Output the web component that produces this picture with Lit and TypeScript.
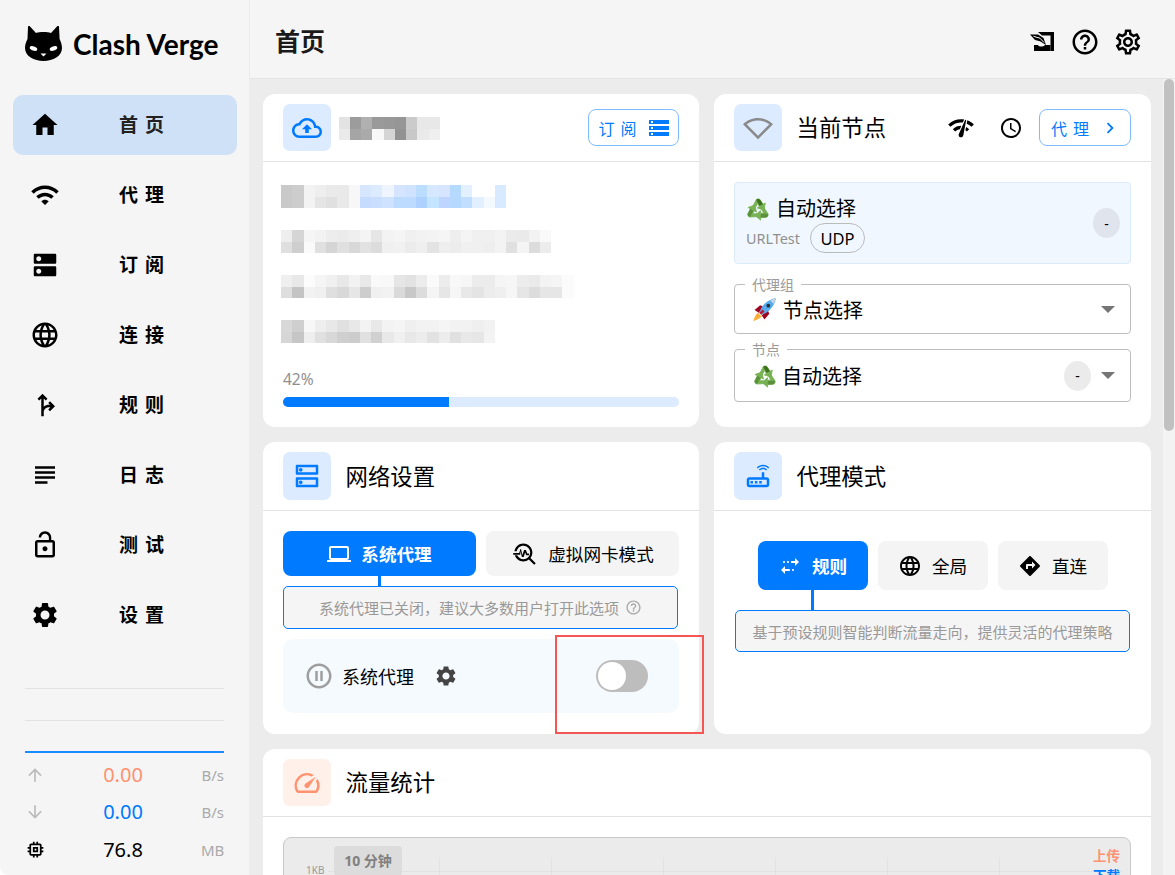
import { LitElement, html, css, svg } from "lit";
import { customElement } from "lit/decorators.js";

const P = {
  home: "M10 20v-6h4v6h5v-8h3L12 3 2 12h3v8z",
  wifi: "M1 9l2 2c4.97-4.97 13.03-4.97 18 0l2-2C16.93 2.93 7.08 2.93 1 9zm8 8l3 3 3-3c-1.65-1.66-4.34-1.66-6 0zm-4-4l2 2c2.76-2.76 7.24-2.76 10 0l2-2C15.14 9.14 8.87 9.14 5 13z",
  dns: "M20 13H4c-.55 0-1 .45-1 1v6c0 .55.45 1 1 1h16c.55 0 1-.45 1-1v-6c0-.55-.45-1-1-1zM7 19c-1.1 0-2-.9-2-2s.9-2 2-2 2 .9 2 2-.9 2-2 2zM20 3H4c-.55 0-1 .45-1 1v6c0 .55.45 1 1 1h16c.55 0 1-.45 1-1V4c0-.55-.45-1-1-1zM7 9c-1.1 0-2-.9-2-2s.9-2 2-2 2 .9 2 2-.9 2-2 2z",
  dnsOutlined: "M20 13H4c-.55 0-1 .45-1 1v6c0 .55.45 1 1 1h16c.55 0 1-.45 1-1v-6c0-.55-.45-1-1-1zm-1 6H5v-4h14v4zm-12-.5c.83 0 1.5-.67 1.5-1.5S7.83 15.5 7 15.5s-1.5.67-1.5 1.5.67 1.5 1.5 1.5zM20 3H4c-.55 0-1 .45-1 1v6c0 .55.45 1 1 1h16c.55 0 1-.45 1-1V4c0-.55-.45-1-1-1zm-1 6H5V5h14v4zM7 8.5c.83 0 1.5-.67 1.5-1.5S7.83 5.5 7 5.5 5.5 6.17 5.5 7 6.17 8.5 7 8.5z",
  language: "M11.99 2C6.47 2 2 6.48 2 12s4.47 10 9.99 10C17.52 22 22 17.52 22 12S17.52 2 11.99 2zm6.93 6h-2.95c-.32-1.25-.78-2.45-1.38-3.56 1.84.63 3.37 1.91 4.33 3.56zM12 4.04c.83 1.2 1.48 2.53 1.91 3.96h-3.82c.43-1.43 1.08-2.76 1.91-3.96zM4.26 14C4.1 13.36 4 12.69 4 12s.1-1.36.26-2h3.38c-.08.66-.14 1.32-.14 2s.06 1.34.14 2H4.26zm.82 2h2.95c.32 1.25.78 2.45 1.38 3.56-1.84-.63-3.37-1.9-4.33-3.56zm2.95-8H5.08c.96-1.66 2.49-2.93 4.33-3.56C8.81 5.55 8.35 6.75 8.03 8zM12 19.96c-.83-1.2-1.48-2.53-1.91-3.96h3.82c-.43 1.43-1.08 2.76-1.91 3.96zM14.34 14H9.66c-.09-.66-.16-1.32-.16-2s.07-1.35.16-2h4.68c.09.65.16 1.32.16 2s-.07 1.34-.16 2zm.25 5.56c.6-1.11 1.06-2.31 1.38-3.56h2.95c-.96 1.65-2.49 2.93-4.33 3.56zM16.36 14c.08-.66.14-1.32.14-2s-.06-1.34-.14-2h3.38c.16.64.26 1.31.26 2s-.1 1.36-.26 2h-3.38z",
  fork: "M14.59 15.59L16 17l4-4-4-4-1.41 1.41L16.17 12c-1.51-.33-3.73.08-5.17 1.36V6.83l1.59 1.59L14 7l-4-4-4 4 1.41 1.41L9 6.83V21h2v-4c.73-2.58 3.07-3.47 5.17-3l-1.58 1.59z",
  subject: "M14 17H4v2h10v-2zm6-8H4v2h16V9zM4 15h16v-2H4v2zM4 5v2h16V5H4z",
  lockOpen: "M12 17c1.1 0 2-.9 2-2s-.9-2-2-2-2 .9-2 2 .9 2 2 2zm6-9h-1V6c0-2.76-2.24-5-5-5S7 3.24 7 6h1.9c0-1.71 1.39-3.1 3.1-3.1 1.71 0 3.1 1.39 3.1 3.1v2H6c-1.1 0-2 .9-2 2v10c0 1.1.9 2 2 2h12c1.1 0 2-.9 2-2V10c0-1.1-.9-2-2-2zm0 12H6V10h12v10z",
  settings: "M19.14 12.94c.04-.3.06-.61.06-.94 0-.32-.02-.64-.07-.94l2.03-1.58c.18-.14.23-.41.12-.61l-1.92-3.32c-.12-.22-.37-.29-.59-.22l-2.39.96c-.5-.38-1.03-.7-1.62-.94l-.36-2.54c-.04-.24-.24-.41-.48-.41h-3.84c-.24 0-.43.17-.47.41l-.36 2.54c-.59.24-1.13.57-1.62.94l-2.39-.96c-.22-.08-.47 0-.59.22L2.74 8.87c-.12.21-.08.47.12.61l2.03 1.58c-.05.3-.09.63-.09.94s.02.64.07.94l-2.03 1.58c-.18.14-.23.41-.12.61l1.92 3.32c.12.22.37.29.59.22l2.39-.96c.5.38 1.03.7 1.62.94l.36 2.54c.05.24.24.41.48.41h3.84c.24 0 .44-.17.47-.41l.36-2.54c.59-.24 1.13-.56 1.62-.94l2.39.96c.22.08.47 0 .59-.22l1.92-3.32c.12-.22.07-.47-.12-.61l-2.01-1.58zM12 15.6c-1.98 0-3.6-1.62-3.6-3.6s1.62-3.6 3.6-3.6 3.6 1.62 3.6 3.6-1.62 3.6-3.6 3.6z",
  settingsOutlined: "M19.43 12.98c.04-.32.07-.64.07-.98 0-.34-.03-.66-.07-.98l2.11-1.65c.19-.15.24-.42.12-.64l-2-3.46c-.09-.16-.26-.25-.44-.25-.06 0-.12.01-.17.03l-2.49 1c-.52-.4-1.08-.73-1.69-.98l-.38-2.65C14.46 2.18 14.25 2 14 2h-4c-.25 0-.46.18-.49.42l-.38 2.65c-.61.25-1.17.59-1.69.98l-2.49-1c-.06-.02-.12-.03-.18-.03-.17 0-.34.09-.43.25l-2 3.46c-.13.22-.07.49.12.64l2.11 1.65c-.04.32-.07.65-.07.98 0 .33.03.66.07.98l-2.11 1.65c-.19.15-.24.42-.12.64l2 3.46c.09.16.26.25.44.25.06 0 .12-.01.17-.03l2.49-1c.52.4 1.08.73 1.69.98l.38 2.65c.03.24.24.42.49.42h4c.25 0 .46-.18.49-.42l.38-2.65c.61-.25 1.17-.59 1.69-.98l2.49 1c.06.02.12.03.18.03.17 0 .34-.09.43-.25l2-3.46c.12-.22.07-.49-.12-.64l-2.11-1.65zm-1.98-1.71c.04.31.05.52.05.73 0 .21-.02.43-.05.73l-.14 1.13.89.7 1.08.84-.7 1.21-1.27-.51-1.04-.42-.9.68c-.43.32-.84.56-1.25.73l-1.06.43-.16 1.13-.2 1.35h-1.4l-.19-1.35-.16-1.13-1.06-.43c-.43-.18-.83-.41-1.23-.71l-.91-.7-1.06.43-1.27.51-.7-1.21 1.08-.84.89-.7-.14-1.13c-.03-.31-.05-.54-.05-.74s.02-.43.05-.73l.14-1.13-.89-.7-1.08-.84.7-1.21 1.27.51 1.04.42.9-.68c.43-.32.84-.56 1.25-.73l1.06-.43.16-1.13.2-1.35h1.39l.19 1.35.16 1.13 1.06.43c.43.18.83.41 1.23.71l.91.7 1.06-.43 1.27-.51.7 1.21-1.07.85-.89.7.14 1.13zM12 8c-2.21 0-4 1.79-4 4s1.79 4 4 4 4-1.79 4-4-1.79-4-4-4zm0 6c-1.1 0-2-.9-2-2s.9-2 2-2 2 .9 2 2-.9 2-2 2z",
  help: "M11 18h2v-2h-2v2zm1-16C6.48 2 2 6.48 2 12s4.48 10 10 10 10-4.48 10-10S17.52 2 12 2zm0 18c-4.41 0-8-3.59-8-8s3.59-8 8-8 8 3.59 8 8-3.59 8-8 8zm0-14c-2.21 0-4 1.79-4 4h2c0-1.1.9-2 2-2s2 .9 2 2c0 2-3 1.75-3 5h2c0-2.25 3-2.5 3-5 0-2.21-1.79-4-4-4z",
  time: "M11.99 2C6.47 2 2 6.48 2 12s4.47 10 9.99 10C17.52 22 22 17.52 22 12S17.52 2 11.99 2zM12 20c-4.42 0-8-3.58-8-8s3.58-8 8-8 8 3.58 8 8-3.58 8-8 8zm.5-13H11v6l5.25 3.15.75-1.23-4.5-2.67z",
  network: "M15.9 5c-.17 0-.32.09-.41.23l-.07.15-5.18 11.65c-.16.29-.26.61-.26.96 0 1.11.9 2.01 2.01 2.01.96 0 1.77-.68 1.96-1.59l.01-.03L16.4 5.5c0-.28-.22-.5-.5-.5zM1 9l2 2c2.88-2.88 6.79-4.08 10.53-3.62l1.19-2.68C9.89 3.84 4.74 5.27 1 9zm20 2l2-2c-1.64-1.64-3.55-2.82-5.59-3.57l-.53 2.82c1.5.62 2.9 1.53 4.12 2.75zm-4 4l2-2c-.8-.8-1.7-1.42-2.66-1.89l-.55 2.92c.42.27.83.59 1.21.97zM5 13l2 2c1.13-1.13 2.56-1.79 4.03-2l1.28-2.88c-2.63-.08-5.3.87-7.31 2.88z",
  cloud: "M19.35 10.04C18.67 6.59 15.64 4 12 4 9.11 4 6.6 5.64 5.35 8.04 2.34 8.36 0 10.91 0 14c0 3.31 2.69 6 6 6h13c2.76 0 5-2.24 5-5 0-2.64-2.05-4.78-4.65-4.96zM19 18H6c-2.21 0-4-1.79-4-4 0-2.05 1.53-3.76 3.56-3.97l1.07-.11.5-.95C8.08 7.14 9.94 6 12 6c2.62 0 4.88 1.86 5.39 4.43l.3 1.5 1.53.11c1.56.1 2.78 1.41 2.78 2.96 0 1.65-1.35 3-3 3zM8 13h2.55v3h2.9v-3H16l-4-4z",
  storage: "M2 20h20v-4H2v4zm2-3h2v2H4v-2zM2 4v4h20V4H2zm4 3H4V5h2v2zm-4 7h20v-4H2v4zm2-3h2v2H4v-2z",
  chevron: "M10 6L8.59 7.41 13.17 12l-4.58 4.59L10 18l6-6z",
  signal: "M12 4C7.31 4 3.07 5.9 0 8.98L12 21 24 8.98C20.93 5.9 16.69 4 12 4zM2.92 9.07C5.51 7.08 8.67 6 12 6s6.49 1.08 9.08 3.07L12 18.17l-9.08-9.1z",
  laptop: "M20 18c1.1 0 1.99-.9 1.99-2L22 6c0-1.1-.9-2-2-2H4c-1.1 0-2 .9-2 2v10c0 1.1.9 2 2 2H0v2h24v-2h-4zM4 6h16v10H4V6z",
  troubleshoot: "M22 20.59l-4.69-4.69C18.37 14.55 19 12.85 19 11c0-4.42-3.58-8-8-8-4.08 0-7.44 3.05-7.93 7h2.02C5.57 7.17 8.03 5 11 5c3.31 0 6 2.69 6 6s-2.69 6-6 6c-2.42 0-4.5-1.44-5.45-3.5H3.4C4.45 16.69 7.46 19 11 19c1.85 0 3.55-.63 4.9-1.69L20.59 22 22 20.59zM8.43 9.69L9.65 15h1.64l1.26-3.78.95 2.28h2.5v-1.5h-1.5l-1.3-3.1h-1.55l-1.55 4.45-1.2-5.35H8.4L7.25 11.5H2V13h6.25z",
  pause: "M9 16h2V8H9v8zm3-14C6.48 2 2 6.48 2 12s4.48 10 10 10 10-4.48 10-10S17.52 2 12 2zm0 18c-4.41 0-8-3.59-8-8s3.59-8 8-8 8 3.59 8 8-3.59 8-8 8zm1-4h2V8h-2v8z",
  router: "M16 4.2c1.5 0 3 .6 4.2 1.7l.8-.8C19.6 3.7 17.8 3 16 3s-3.6.7-5 2.1l.8.8C13 4.8 14.5 4.2 16 4.2zm-3.3 2.5l.8.8c.7-.7 1.6-1 2.5-1s1.8.3 2.5 1l.8-.8c-.9-.9-2.1-1.4-3.3-1.4s-2.4.5-3.3 1.4zM19 13h-2V9h-2v4H5c-1.1 0-2 .9-2 2v4c0 1.1.9 2 2 2h14c1.1 0 2-.9 2-2v-4c0-1.1-.9-2-2-2zm0 6H5v-4h14v4zM6 16h2v2H6zm3.5 0h2v2h-2zm3.5 0h2v2h-2z",
  stop: "M17 4l4 4-4 4V9h-4V7h4V4zm-7 3c-.55 0-1 .45-1 1s.45 1 1 1 1-.45 1-1-.45-1-1-1zM6 7c-.55 0-1 .45-1 1s.45 1 1 1 1-.45 1-1-.45-1-1-1zm1 10h4v-2H7v-3l-4 4 4 4v-3zm4 0c.55 0 1-.45 1-1s-.45-1-1-1-1 .45-1 1 .45 1 1 1zm4 0c.55 0 1-.45 1-1s-.45-1-1-1-1 .45-1 1 .45 1 1 1z",
  direct: "M21.71 11.29l-9-9c-.39-.39-1.02-.39-1.41 0l-9 9c-.39.39-.39 1.02 0 1.41l9 9c.39.39 1.02.39 1.41 0l9-9c.39-.38.39-1.01 0-1.41zM14 14.5V12h-4v3H8v-4c0-.55.45-1 1-1h5V7.5l3.5 3.5-3.5 3.5z",
  speed: "M20.38 8.57l-1.23 1.85a8 8 0 0 1-.22 7.58H5.07A8 8 0 0 1 15.58 6.85l1.85-1.23A10 10 0 0 0 3.35 19a2 2 0 0 0 1.72 1h13.85a2 2 0 0 0 1.74-1 10 10 0 0 0-.27-10.44zm-9.79 6.84a2 2 0 0 0 2.83 0l5.66-8.49-8.49 5.66a2 2 0 0 0 0 2.83z",
  up: "M4 12l1.41 1.41L11 7.83V20h2V7.83l5.58 5.59L20 12l-8-8-8 8z",
  down: "M20 12l-1.41-1.41L13 16.17V4h-2v12.17l-5.58-5.59L4 12l8 8 8-8z",
  memory: "M15 9H9v6h6V9zm-2 4h-2v-2h2v2zm8-2V9h-2V7c0-1.1-.9-2-2-2h-2V3h-2v2h-2V3H9v2H7c-1.1 0-2 .9-2 2v2H3v2h2v2H3v2h2v2c0 1.1.9 2 2 2h2v2h2v-2h2v2h2v-2h2c1.1 0 2-.9 2-2v-2h2v-2h-2v-2h2zm-4 6H7V7h10v10z",
};

const icon = (d: string, size = 24, color = "currentColor") => html`<svg
  class="icon"
  width=${size}
  height=${size}
  viewBox="0 0 24 24"
  fill=${color}
>
  <path d=${d}></path>
</svg>`;

const recycle = (size: number) => html`<svg class="icon recycle" width=${size} height=${size} viewBox="0 0 24 24">
  ${[0, 120, 240].map(
    (r) => svg`<g transform="rotate(${r} 12 13.2)">
      <path
        d="M6.600 9.800 10.200 2.800c.6-1.100 3-1.300 3.900-.1l2.900 4.600 2.300-1.300-1.300 7-6.800-2.100 2.200-1.300-1.800-3-2.900 5.100z"
        fill="#77b255"
        stroke="#77b255"
        stroke-width=".8"
        stroke-linejoin="round"
      ></path>
      <path d="M10.200 2.800c.6-1.100 3-1.300 3.900-.1l2.900 4.600-3.400 1.500-1.800-3z" fill=${r === 0 ? "#3e721d" : "#5c913b"}></path>
    </g>`
  )}
</svg>`;

const rocket = (size: number) => html`<svg class="icon" width=${size} height=${size} viewBox="0 0 24 24">
  <path d="M5 15.500C3 17 1 21.500.4 24c2.600-.5 7-2.800 8.600-4.600z" fill="#ffac33"></path>
  <path d="M1.600 12.500 7.500 7.500 11 9l-5 6.500zM12 22.500l5-6-1.500-3.500-6.500 5z" fill="#a0041e"></path>
  <path d="M6.500 15.500C8.500 8 15 1.700 24 0c-1.600 9-8 15.500-15.500 17.500z" fill="#55acee"></path>
  <path d="M6.500 15.500 10 12l2 2-3.500 3.500z" fill="#be1931"></path>
  <circle cx="16" cy="8" r="2" fill="#292f33"></circle>
  <path d="M18 2.500 21.500 6 24 0z" fill="#ccd6dd"></path>
</svg>`;

const catLogo = html`<svg class="icon" width="37" height="35" viewBox="0 0 37 35">
  <path
    d="M3 .5C3.500 0 4.500-.1 5 .5L11 7c4-1.200 11-1.200 15 0L32 .5c.5-.6 1.500-.5 2 0l.6 12.500C36 16 37 19 37 22c0 8-9 13-18.500 13S0 30 0 22c0-3 1-6 2.500-9z"
    fill="#000"
  ></path>
  <ellipse cx="8.500" cy="22.500" rx="3.900" ry="2.100" transform="rotate(18 8.500 22.500)" fill="#fff"></ellipse>
  <ellipse cx="28.500" cy="22.500" rx="3.900" ry="2.100" transform="rotate(-18 28.500 22.500)" fill="#fff"></ellipse>
  <path d="M15.500 27.500h6l-3 3z" fill="#fff"></path>
</svg>`;

const uwpIcon = html`<svg class="icon uwp" width="24" height="19" viewBox="0 0 24 19">
  <path d="M8 0H24V19H20.500V3.500H12z" fill="#000"></path>
  <path d="M0 2.500H8L13.500 6 16 13 10 9.200 5 8z" fill="#000"></path>
  <path d="M3.500 4.300 10 6.200 14 10.500" stroke="#f5f5f5" stroke-width="1" fill="none"></path>
  <path d="M4 13H8C9 15 13 15 15 13H20.500V19H4z" fill="#000"></path>
</svg>`;

const navItems: [string, string][] = [
  [P.home, "首页"],
  [P.wifi, "代理"],
  [P.dns, "订阅"],
  [P.language, "连接"],
  [P.fork, "规则"],
  [P.subject, "日志"],
  [P.lockOpen, "测试"],
  [P.settings, "设置"],
];

// pixelated (redacted) subscription info, one list of cell colours per row
const titleBlur = [
  "e3 9c b0 9a 98 96 cb e8 e8",
  "ea a5 aa f8 d5 92 c8 ea ef",
];
const infoBlur = [
  [
    "c9 cd f3 ee ea e9 f7 d6e6ff dcebff eef5ff d5e4ff cfe2ff bbddff d5e8ff d6e4ff b5d9ff e2f0ff ff ff d8eaff",
    "c9 cd f3 e5 e0 e9 f7 c5dcff cadfff cfe2ff bddaff bddaff aed2ff c5e4ff bed6ff b5d8ff c2deff e2efff f3f9ff d8eaff",
  ],
  [
    "ee d5 f5 f2 ed eb ef f4 e6 f3 f5 f0 f2 f3 f5 ee f4 f0 f0 f3 eb ea f2 f9",
    "df ce fa e0 d5 e0 d8 e2 dc f0 f1 eb ef e3 ee ec f0 f0 ee f3 e0 f4 dc ec",
  ],
  [
    "ef e8 fc f5 f0 e8 f2 e8 f9 f8 e6 e2 ec fa ec f8 f6 ec ec f5 f6 ec ea f3 f5 fb",
    "de c4 f2 f0 df d8 e6 cd f0 f2 da c8 dc f4 e6 f6 e8 e4 ec ef f6 e6 dc e6 e6 fb",
  ],
  [
    "d8 cf f7 ee e8 e0 e8 f3 e8 f3 f5 ef f2 f2 f5 f2 f2 ef f2",
    "d6 c6 ee e0 d8 cf cc e0 d0 e8 f0 e8 ec e2 ec e0 e8 e6 f3",
  ],
];

const cellColor = (c: string) => (c.length === 2 ? `#${c}${c}${c}` : `#${c}`);

const mosaic = (rows: string[]) => html`<div class="mosaic">
  ${rows.map(
    (row) => html`<div class="mosaic-row">
      ${row.split(" ").map((c) => html`<i style="background:${cellColor(c)}"></i>`)}
    </div>`
  )}
</div>`;

@customElement("app-root")
export class AppRoot extends LitElement {
  static styles = css`
    :host {
      display: block;
      position: relative;
      width: 1175px;
      height: 875px;
      overflow: hidden;
      background: #fff;
      font-family: "Noto Sans", "Noto Sans CJK SC", sans-serif;
      color: #000;
    }

    .icon {
      display: block;
      flex: none;
    }

    .recycle {
      margin-right: -2px;
    }

    .app {
      display: flex;
      height: 100%;
    }

    /* sidebar */
    .sidebar {
      width: 249px;
      flex: none;
      display: flex;
      flex-direction: column;
      background: #f5f5f5;
      border-right: 1px solid #ebebeb;
      border-bottom-left-radius: 8px;
    }

    .logo {
      height: 95px;
      box-sizing: border-box;
      padding: 26px 0 0 25px;
      display: flex;
      gap: 11px;
    }

    .logo span {
      font-family: Lato, "Noto Sans", sans-serif;
      font-weight: 700;
      font-size: 28px;
      line-height: 36px;
    }

    .nav {
      display: flex;
      flex-direction: column;
      gap: 10px;
      margin: 0 12px 0 13px;
    }

    .nav-item {
      height: 60px;
      display: flex;
      align-items: center;
      padding-left: 17px;
      border-radius: 10px;
    }

    .nav-item.active {
      background: #cfe1f6;
    }

    .nav-item.active span {
      color: #222;
    }

    .nav-item span {
      margin: -2px 0 0 59px;
      font-size: 19px;
      font-weight: 700;
      letter-spacing: 7px;
      white-space: nowrap;
    }

    .side-foot {
      margin-top: auto;
      padding: 0 25px 7px;
    }

    .side-line {
      height: 31px;
      border-bottom: 1px solid #e2e2e2;
    }

    .side-line.blue {
      border-bottom: 2px solid #1a8cff;
      height: 30px;
      margin-bottom: 3px;
    }

    .stat {
      height: 37px;
      display: grid;
      grid-template-columns: 20px 156px 1fr;
      align-items: center;
      color: #bbb;
    }

    .stat.mem {
      height: 38px;
      box-sizing: border-box;
      padding-top: 1px;
    }

    .stat b {
      font-weight: 400;
      font-size: 20px;
      text-align: center;
    }

    .stat em {
      font-style: normal;
      font-size: 15px;
      color: #aaa;
      text-align: right;
      white-space: nowrap;
    }

    /* main */
    .main {
      flex: 1;
      min-width: 0;
      display: flex;
      flex-direction: column;
      background: #ececec;
    }

    .topbar {
      height: 78px;
      flex: none;
      display: flex;
      align-items: center;
      padding: 0 32px 0 25px;
      background: #f5f5f5;
      border-bottom: 1px solid #e4e4e4;
    }

    .topbar h1 {
      margin: 0;
      padding-top: 2px;
      font-size: 25px;
      font-weight: 700;
      color: #1a1a1a;
    }

    .top-actions {
      margin-left: auto;
      padding-top: 6px;
      display: flex;
      align-items: center;
      gap: 13px;
    }

    .uwp {
      margin: 0 3px 1px 0;
    }

    .content-wrap {
      flex: 1;
      min-height: 0;
      display: flex;
    }

    .content {
      flex: 1;
      min-width: 0;
      overflow: hidden;
      padding: 15px 12px 0 13px;
      display: grid;
      grid-template-columns: 436px 437px;
      grid-auto-rows: min-content;
      gap: 15px;
    }

    .scrollbar {
      width: 12px;
      flex: none;
      background: #f3f3f3;
    }

    .scrollbar div {
      width: 10px;
      height: 352px;
      margin-left: 1px;
      border-radius: 5px;
      background: #c1c1c1;
    }

    /* cards */
    .card {
      background: #fff;
      border-radius: 12px;
      display: flex;
      flex-direction: column;
      min-width: 0;
    }

    .card.wide {
      grid-column: span 2;
    }

    .card-head {
      height: 68px;
      box-sizing: border-box;
      display: flex;
      align-items: center;
      padding: 0 20px;
      gap: 15px;
      border-bottom: 1px solid #e2e2e2;
    }

    .card-head.tall {
      height: 69px;
    }

    .card-head h2 {
      margin: 0;
      padding-bottom: 2px;
      font-size: 22.4px;
      font-weight: 400;
      white-space: nowrap;
    }

    .head-icon {
      width: 47.5px;
      height: 47.5px;
      flex: none;
      display: flex;
      align-items: center;
      justify-content: center;
      border-radius: 7px;
      background: #dcebff;
      color: #007aff;
    }

    .head-icon.grey {
      color: #8a8a8a;
    }

    .head-icon.orange {
      background: #fff0e9;
      color: #ff9270;
    }

    .head-right {
      margin-left: auto;
      display: flex;
      align-items: center;
    }

    .link-btn {
      width: 91px;
      height: 37px;
      box-sizing: border-box;
      display: flex;
      align-items: center;
      justify-content: center;
      padding-left: 2px;
      border: 1px solid #7fbcff;
      border-radius: 8px;
      color: #007aff;
      font-size: 16px;
      letter-spacing: 6px;
      white-space: nowrap;
    }

    .link-btn.wider {
      width: 92px;
    }

    .link-btn svg {
      margin-left: 4px;
    }

    .head-tool-a {
      margin-right: 24px;
    }

    .head-tool-b {
      margin-right: 16px;
    }

    .body {
      padding: 20px;
      display: flex;
      flex-direction: column;
    }

    /* subscription card */
    .title-blur {
      margin: 2px 0 0 -7px;
    }

    .mosaic-row {
      display: flex;
    }

    .mosaic-row i {
      width: 11.25px;
      height: 11.5px;
      flex: none;
    }

    .info {
      padding-top: 23px;
    }

    .info-lines {
      display: flex;
      flex-direction: column;
      gap: 22px;
      margin-left: -2px;
    }

    .percent {
      margin-top: 26px;
      height: 20px;
      line-height: 20px;
      font-size: 15.5px;
      color: #8f8f8f;
    }

    .bar {
      margin-top: 8px;
      height: 10px;
      border-radius: 5px;
      background: #dcebff;
      overflow: hidden;
    }

    .bar div {
      height: 100%;
      background: #007aff;
    }

    /* current node */
    .node-box {
      height: 82px;
      box-sizing: border-box;
      display: flex;
      align-items: center;
      justify-content: space-between;
      padding: 0 10px 0 11px;
      background: #f0f7ff;
      border: 1px solid #dcebfb;
      border-radius: 4px;
    }

    .node-name {
      display: flex;
      align-items: center;
      gap: 8px;
      margin-top: 1px;
      font-size: 20px;
      line-height: 30px;
    }

    .node-meta {
      display: flex;
      align-items: center;
      gap: 10px;
      font-size: 14.4px;
      color: #8f8f8f;
      margin-top: -1px;
    }

    .chip {
      height: 30px;
      padding: 0 9.500px;
      box-sizing: border-box;
      display: flex;
      align-items: center;
      border: 1px solid #bbb;
      border-radius: 15px;
      font-size: 16.5px;
      color: #000;
    }

    .delay {
      width: 27px;
      height: 30px;
      display: flex;
      align-items: center;
      justify-content: center;
      border-radius: 50%;
      font-size: 14px;
      background: #e0e4ec;
      flex: none;
    }

    .select {
      position: relative;
      margin-top: 15px;
      height: 50px;
      box-sizing: border-box;
      display: flex;
      align-items: center;
      gap: 7px;
      padding: 0 15px 0 18px;
      border: 1px solid #bdbdbd;
      border-radius: 4px;
      font-size: 20px;
    }

    .select.first {
      margin-top: 20px;
    }

    .select.second {
      height: 53px;
    }

    .select label {
      position: absolute;
      left: 10px;
      top: -10px;
      padding: 0 7px;
      background: #fff;
      font-size: 14px;
      line-height: 20px;
      color: #9a9a9a;
    }

    .select .delay {
      margin-left: auto;
      background: #ebebeb;
    }

    .caret {
      margin-left: auto;
      width: 0;
      height: 0;
      border-left: 7px solid transparent;
      border-right: 7px solid transparent;
      border-top: 7px solid #757575;
    }

    .select .delay + .caret {
      margin-left: 3px;
    }

    /* tabs */
    .tabs {
      display: grid;
      grid-template-columns: 1fr 1fr;
      gap: 10px;
    }

    .tab {
      height: 45px;
      display: flex;
      align-items: center;
      justify-content: center;
      gap: 10px;
      border-radius: 8px;
      background: #f4f4f4;
      font-size: 17.6px;
      white-space: nowrap;
    }

    .tab.on {
      background: #007aff;
      color: #fff;
      font-weight: 700;
    }

    .tick {
      width: 3px;
      height: 10px;
      background: #007aff;
      margin-left: 95px;
    }

    .hint {
      height: 43px;
      box-sizing: border-box;
      display: flex;
      align-items: center;
      justify-content: center;
      gap: 6px;
      margin-right: 1px;
      border: 1px solid #007aff;
      border-radius: 5px;
      background: #f5f5f5;
      font-size: 15px;
      color: #999;
      white-space: nowrap;
    }

    .net-body {
      padding-bottom: 21px;
    }

    .proxy-row {
      margin-top: 10px;
      height: 74px;
      display: flex;
      align-items: center;
      padding: 0 31px 0 21px;
      border-radius: 10px;
      background: #f5faff;
      color: #9e9e9e;
    }

    .proxy-row span {
      margin: 0 20px 0 8px;
      font-size: 18px;
      color: #000;
    }

    .switch {
      margin-left: auto;
      width: 52px;
      height: 32px;
      box-sizing: border-box;
      padding: 2px;
      border-radius: 16px;
      background: #bdbdbd;
    }

    .switch div {
      width: 28px;
      height: 28px;
      border-radius: 50%;
      background: #fff;
    }

    /* proxy mode */
    .mode-body {
      padding-top: 30px;
    }

    .mode-tabs {
      display: flex;
      justify-content: center;
      gap: 10px;
    }

    .mode-tabs .tab {
      width: 110px;
      height: 49px;
    }

    .mode-tick {
      height: 20px;
      margin-left: 77px;
    }

    .mode-hint {
      margin: 0 1px;
      height: 42px;
    }

    /* traffic */
    .chart {
      position: relative;
      height: 300px;
      box-sizing: border-box;
      border: 1px solid #c8c8c8;
      border-radius: 8px;
      background: #ebebeb;
    }

    .chart-chip {
      position: absolute;
      left: 50px;
      top: 8px;
      width: 68px;
      height: 30px;
      box-sizing: border-box;
      padding-bottom: 2px;
      display: flex;
      align-items: center;
      justify-content: center;
      border-radius: 4px;
      background: #dcdcdc;
      font-size: 14px;
      font-weight: 700;
      color: #808080;
    }

    .chart-y {
      position: absolute;
      left: 22px;
      top: 25px;
      font-size: 10px;
      color: #999;
    }

    .chart-vline {
      position: absolute;
      top: 20px;
      width: 1px;
      height: 270px;
      background: #e2e2e2;
    }

    .chart-hline {
      position: absolute;
      left: 44px;
      right: 8px;
      top: 33px;
      height: 1px;
      background: #e2e2e2;
    }

    .chart-legend {
      position: absolute;
      left: 809px;
      font-size: 13.5px;
      font-weight: 700;
    }

    /* screenshot annotation */
    .annotation {
      position: absolute;
      left: 555px;
      top: 635px;
      width: 149px;
      height: 99px;
      box-sizing: border-box;
      border: 2px solid #f55555;
    }
  `;

  private renderSidebar() {
    return html`<aside class="sidebar">
      <div class="logo">${catLogo}<span>Clash Verge</span></div>
      <nav class="nav">
        ${navItems.map(
          ([d, label], i) => html`<div class="nav-item ${i === 0 ? "active" : ""}">
            ${icon(d, 30)}<span>${label}</span>
          </div>`
        )}
      </nav>
      <div class="side-foot">
        <div class="side-line"></div>
        <div class="side-line"></div>
        <div class="side-line blue"></div>
        <div class="stat">
          ${icon(P.up, 20)}<b style="color:#ff9270">0.00</b><em>B/s</em>
        </div>
        <div class="stat">
          ${icon(P.down, 20)}<b style="color:#007aff">0.00</b><em>B/s</em>
        </div>
        <div class="stat mem">
          ${icon(P.memory, 21, "#000")}<b style="color:#000">76.8</b><em>MB</em>
        </div>
      </div>
    </aside>`;
  }

  private renderSubscription() {
    return html`<section class="card">
      <div class="card-head">
        <div class="head-icon">${icon(P.cloud, 30)}</div>
        <div class="title-blur">${mosaic(titleBlur)}</div>
        <div class="head-right">
          <div class="link-btn">订阅${icon(P.storage, 24)}</div>
        </div>
      </div>
      <div class="body info">
        <div class="info-lines">${infoBlur.map((rows) => mosaic(rows))}</div>
        <div class="percent">42%</div>
        <div class="bar"><div style="width:42%"></div></div>
      </div>
    </section>`;
  }

  private renderCurrentNode() {
    return html`<section class="card">
      <div class="card-head">
        <div class="head-icon grey">${icon(P.signal, 30)}</div>
        <h2>当前节点</h2>
        <div class="head-right">
          <span class="head-tool-a">${icon(P.network, 28)}</span>
          <span class="head-tool-b">${icon(P.time, 24)}</span>
          <div class="link-btn wider">代理${icon(P.chevron, 22)}</div>
        </div>
      </div>
      <div class="body">
        <div class="node-box">
          <div>
            <div class="node-name">${recycle(24)}自动选择</div>
            <div class="node-meta">URLTest<span class="chip">UDP</span></div>
          </div>
          <div class="delay">-</div>
        </div>
        <div class="select first">
          <label>代理组</label>${rocket(23)}节点选择<i class="caret"></i>
        </div>
        <div class="select second">
          <label>节点</label>${recycle(24)}自动选择
          <div class="delay">-</div>
          <i class="caret"></i>
        </div>
      </div>
    </section>`;
  }

  private renderNetwork() {
    return html`<section class="card">
      <div class="card-head tall">
        <div class="head-icon">${icon(P.dnsOutlined, 30)}</div>
        <h2>网络设置</h2>
      </div>
      <div class="body net-body">
        <div class="tabs">
          <div class="tab on">${icon(P.laptop, 24)}系统代理</div>
          <div class="tab">${icon(P.troubleshoot, 27)}虚拟网卡模式</div>
        </div>
        <div class="tick"></div>
        <div class="hint">系统代理已关闭，建议大多数用户打开此选项 ${icon(P.help, 17, "#aaa")}</div>
        <div class="proxy-row">
          ${icon(P.pause, 30)}
          <span>系统代理</span>
          ${icon(P.settings, 24, "#444")}
          <div class="switch"><div></div></div>
        </div>
      </div>
    </section>`;
  }

  private renderMode() {
    return html`<section class="card">
      <div class="card-head tall">
        <div class="head-icon">${icon(P.router, 30)}</div>
        <h2>代理模式</h2>
      </div>
      <div class="body mode-body">
        <div class="mode-tabs">
          <div class="tab on">${icon(P.stop, 24)}规则</div>
          <div class="tab">${icon(P.language, 24)}全局</div>
          <div class="tab">${icon(P.direct, 24)}直连</div>
        </div>
        <div class="tick mode-tick"></div>
        <div class="hint mode-hint">基于预设规则智能判断流量走向，提供灵活的代理策略</div>
      </div>
    </section>`;
  }

  private renderTraffic() {
    const vlines = [155, 267, 379, 491, 603, 715];
    return html`<section class="card wide">
      <div class="card-head">
        <div class="head-icon orange">${icon(P.speed, 30)}</div>
        <h2>流量统计</h2>
      </div>
      <div class="body">
        <div class="chart">
          <div class="chart-hline"></div>
          ${vlines.map((x) => html`<div class="chart-vline" style="left:${x}px"></div>`)}
          <div class="chart-chip">10 分钟</div>
          <div class="chart-y">1KB</div>
          <div class="chart-legend" style="top:7px;color:#ff9270">上传</div>
          <div class="chart-legend" style="top:27px;color:#007aff">下载</div>
        </div>
      </div>
    </section>`;
  }

  protected render() {
    return html`<div class="app">
        ${this.renderSidebar()}
        <main class="main">
          <header class="topbar">
            <h1>首页</h1>
            <div class="top-actions">
              ${uwpIcon}${icon(P.help, 30)}${icon(P.settingsOutlined, 30)}
            </div>
          </header>
          <div class="content-wrap">
            <div class="content">
              ${this.renderSubscription()} ${this.renderCurrentNode()} ${this.renderNetwork()}
              ${this.renderMode()} ${this.renderTraffic()}
            </div>
            <div class="scrollbar"><div></div></div>
          </div>
        </main>
      </div>
      <div class="annotation"></div>`;
  }
}
